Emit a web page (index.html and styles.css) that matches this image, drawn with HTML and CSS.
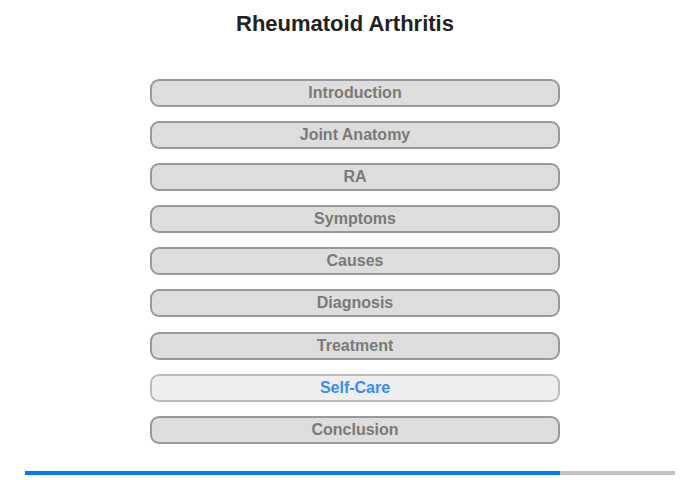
FILE: index.html
```html
<!DOCTYPE html>
<html>
<head>
  <meta name="viewport" content="width=device-width, initial-scale=1">
  <link rel="stylesheet" href="styles.css">
</head>
<body>

<div class="page">
  <h1 class="title">Rheumatoid Arthritis</h1>

  <div class="menu">
    <button class="menu-btn">Introduction</button>
    <button class="menu-btn">Joint Anatomy</button>
    <button class="menu-btn">RA</button>
    <button class="menu-btn">Symptoms</button>
    <button class="menu-btn">Causes</button>
    <button class="menu-btn">Diagnosis</button>
    <button class="menu-btn">Treatment</button>
    <button class="menu-btn active">Self-Care</button>
    <button class="menu-btn">Conclusion</button>
  </div>

  <div class="progress">
    <div class="progress-fill" style="width: 82.3%"></div>
  </div>
</div>

</body>
</html>
```

FILE: styles.css
```css
body {
  font-family: "Liberation Sans", Arial, sans-serif;
  margin: 0;
  background-color: #fff;
}

.page {
  width: 700px;
  height: 480px;
  display: flex;
  flex-direction: column;
}

.title {
  margin: 11px 0 0;
  font-size: 22px;
  line-height: 25px;
  text-align: center;
  color: #222;
  padding-right: 10px;
}

.menu {
  display: flex;
  flex-direction: column;
  gap: 14.1px;
  width: 410px;
  margin: 43px 0 0 150px;
}

.menu-btn {
  height: 28px;
  padding: 0;
  font-family: inherit;
  font-size: 16px;
  font-weight: bold;
  color: #7a7a76;
  background-color: #dddddd;
  border: 2px solid #999;
  border-radius: 9px;
  cursor: pointer;
}

.menu-btn.active {
  color: #3a8cf5;
  background-color: #eeeeee;
  border-color: #bbb;
}

.progress {
  width: 650px;
  height: 4px;
  margin: 27px 0 0 25px;
  background-color: #c2c2c2;
}

.progress-fill {
  height: 100%;
  background-color: #007bff;
}
```
